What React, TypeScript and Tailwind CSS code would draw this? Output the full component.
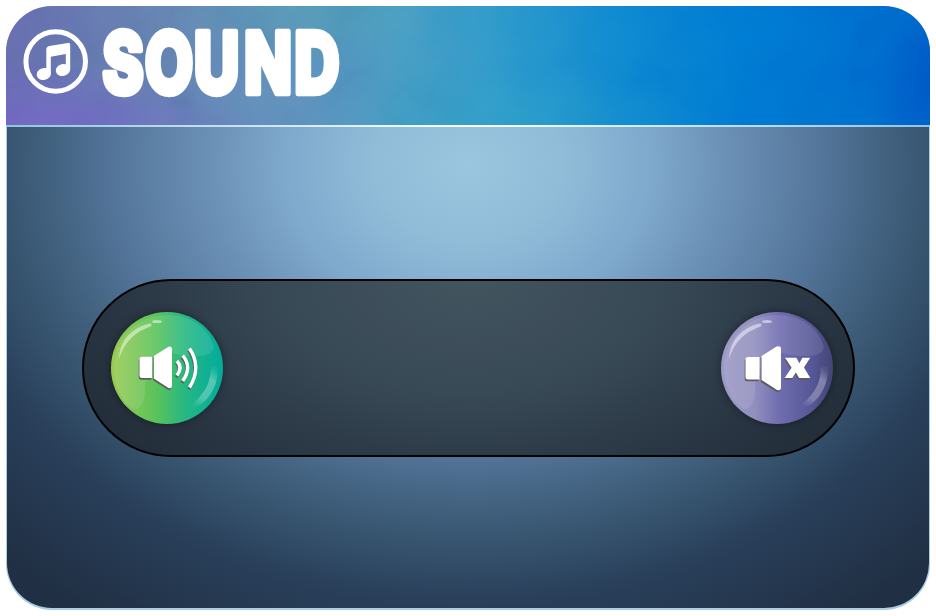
import type { ReactNode } from "react";

function MusicBadge() {
  return (
    <svg width="66" height="66" viewBox="23 28 66 66" aria-hidden="true">
      <circle cx="55.7" cy="61.5" r="29.8" fill="none" stroke="white" strokeWidth="5" />
      <ellipse cx="43.8" cy="74" rx="7.2" ry="6" fill="white" transform="rotate(-12 43.8 74)" />
      <ellipse cx="62.9" cy="70" rx="7.2" ry="6" fill="white" transform="rotate(-12 62.9 70)" />
      <path d="M46.3 74V49.5Q46.3 46.5 49.3 46L67.8 42.9Q70.2 42.5 70.2 45V70H65.8V54L50.8 56.7V74Z" fill="white" />
    </svg>
  );
}

function Title() {
  return (
    <svg width="260" height="112" viewBox="100 6 260 112">
      <text
        transform="translate(0 92.5) scale(0.74 1)"
        x="138.5 196 262 330 398"
        y="0 0 0 0 0"
        className="font-['Inter',sans-serif] text-[84px] font-extrabold"
        fill="white"
        stroke="white"
        strokeWidth="6.5"
        strokeLinejoin="round"
      >
        SOUND
      </text>
    </svg>
  );
}

/* Faint pigment texture over the header wash */
function Watercolor() {
  return (
    <svg className="absolute inset-0 h-full w-full opacity-10 mix-blend-soft-light" aria-hidden="true">
      <filter id="pigment">
        <feTurbulence type="fractalNoise" baseFrequency="0.016 0.016" numOctaves="5" seed="21" />
        <feColorMatrix values="1.4 0 0 0 -0.2  1.4 0 0 0 -0.2  1.4 0 0 0 -0.2  0 0 0 0 1" />
      </filter>
      <rect width="100%" height="100%" filter="url(#pigment)" />
    </svg>
  );
}

type OrbProps = { id: string; label: string; stops: [string, string][]; children: ReactNode };

function Orb({ id, label, stops, children }: OrbProps) {
  return (
    <button aria-label={label} className="size-28 rounded-full shadow-[0_0_8px_rgba(0,0,0,0.4)]">
      <svg width="112" height="112" viewBox="0 0 112 112" className="block">
        <defs>
          <linearGradient id={id}>
            {stops.map(([offset, color]) => (
              <stop key={offset} offset={offset} stopColor={color} />
            ))}
          </linearGradient>
          <linearGradient id={id + "-rim"} x1="0.7" y1="0" x2="0.3" y2="1">
            <stop offset="0" stopColor="white" stopOpacity="0.05" />
            <stop offset="0.25" stopColor="white" stopOpacity="0.3" />
            <stop offset="0.75" stopColor="white" stopOpacity="0.25" />
            <stop offset="1" stopColor="white" stopOpacity="0.02" />
          </linearGradient>
        </defs>
        <circle cx="56" cy="56" r="56" fill={`url(#${id})`} />
        <path d="M56 3C79 3 96 15 102 32C105 41 96 44 86 44C72 44 64 43 56 38C45 48 35 58 34 76C34 90 30 97 24 97C15 96 3 76 3 56C3 27 27 3 56 3Z" fill="white" fillOpacity="0.1" />
        <path d="M8 47C9 28 21 16 38 11.5C41 11 41.5 13.5 39 14.8C24 20 13 30 8 47Z" fill="white" fillOpacity="0.48" />
        <ellipse cx="46" cy="9.5" rx="5" ry="1.6" fill="white" fillOpacity="0.5" />
        <path d="M100 55Q104 53.5 107 56C107 76 96 92 81 97Q79 94 82 91C94 82 100 69 100 55Z" fill={`url(#${id}-rim)`} />
        {children}
      </svg>
    </button>
  );
}

function OnGlyph() {
  const horn = "M31 20.8H41V42H31Q28.5 42 28.5 39.5V23.3Q28.5 20.8 31 20.8ZM42.8 20L57.5 10.8Q61 9.5 61 13V49.5Q61 53 57.5 52L42.8 42.5Z";
  const waves = (
    <>
      <path d="M66 25Q72 31.5 66 39.5" />
      <path d="M71.7 19.5Q81.5 31 71.7 45" />
      <path d="M78.5 12.5Q91 31 78.5 51.5" />
    </>
  );
  return (
    <g transform="translate(0 24)">
      <g transform="translate(-0.7 1.7)">
        <path d={horn} fill="#5d5f59" />
        <g stroke="#5d5f59" strokeWidth="3.4" fill="none">{waves}</g>
      </g>
      <path d={horn} fill="white" />
      <g stroke="white" strokeWidth="3.4" fill="none">{waves}</g>
    </g>
  );
}

function OffGlyph() {
  const shape = "M27 45H38.5V67.5H27Q24.5 67.5 24.5 65V47.5Q24.5 45 27 45ZM40.5 44L55.5 34.6Q60 33 60 37V75.5Q60 79 56 78L40.5 68Z";
  const cross = "M64 45.7H75.4L78.3 51.2L81.5 45.7H89.2L83 55.6L89.3 66H78.2L74.8 60.5L71.3 66H63.6L70.6 55.7Z";
  return (
    <>
      <g fill="#5d5b5b" transform="translate(-0.8 1.8)">
        <path d={shape} />
        <path d={cross} />
      </g>
      <g fill="white">
        <path d={shape} />
        <path d={cross} />
      </g>
    </>
  );
}

export default function App() {
  return (
    <main className="h-[616px] w-[936px] bg-white p-1.5">
      <section className="flex h-[604px] w-[924px] flex-col overflow-hidden rounded-[46px] bg-[#a9cde2]">
        <header className="relative h-[119px] shrink-0 bg-[radial-gradient(ellipse_240px_80px_at_2%_115%,#7464c9_0%,#7464c900_100%),radial-gradient(ellipse_130px_60px_at_32%_0%,#44aaa755_0%,#44aaa700_100%),radial-gradient(ellipse_90px_80px_at_103%_65%,#0050c5_0%,#0050c500_100%),radial-gradient(ellipse_180px_60px_at_56%_100%,#30a6c555_0%,#30a6c500_100%),linear-gradient(90deg,#656cae_0%,#6484b2_17%,#5d91bd_32%,#459cc3_43%,#2a98ca_54%,#0c87d0_67%,#0079d2_80%,#0068cb_100%)]">
          <Watercolor />
          <h1 className="relative flex h-full pl-[17px]">
            <span className="pt-[22px]"><MusicBadge /></span>
            <span className="ml-[11px]"><Title /></span>
          </h1>
        </header>
        <div className="h-0.5 shrink-0 bg-linear-to-r from-[#93c5dc] via-white to-[#93c5dc]" />
        <div className="mx-px mb-[2px] flex flex-1 items-start justify-center rounded-b-[45px] bg-[radial-gradient(ellipse_480px_390px_at_50%_38px,#9bc6df_0%,#91bcd8_20%,#7fa9cd_38%,#7096bc_50%,#54759a_74%,#426280_87%,#36536d_98%,#293f5a_112%,#202f43_140%)] pt-[152px]">
          <div className="flex h-[178px] w-[773px] items-center justify-between rounded-full border-2 border-black bg-[radial-gradient(ellipse_410px_240px_at_50%_0,#42545e_0%,#394a57_45%,#2b3845_80%,#222d39_110%)] pl-[27px] pr-5">
            <Orb id="sound-on" label="Sound on" stops={[["0", "#9ccb51"], ["0.4", "#5bc35b"], ["0.65", "#28b880"], ["0.9", "#0aaf97"], ["1", "#05ab98"]]}>
              <OnGlyph />
            </Orb>
            <Orb id="sound-off" label="Sound off" stops={[["0", "#9c9ac6"], ["0.3", "#918fbe"], ["0.52", "#706db0"], ["0.8", "#575897"], ["1", "#434477"]]}>
              <OffGlyph />
            </Orb>
          </div>
        </div>
      </section>
    </main>
  );
}
